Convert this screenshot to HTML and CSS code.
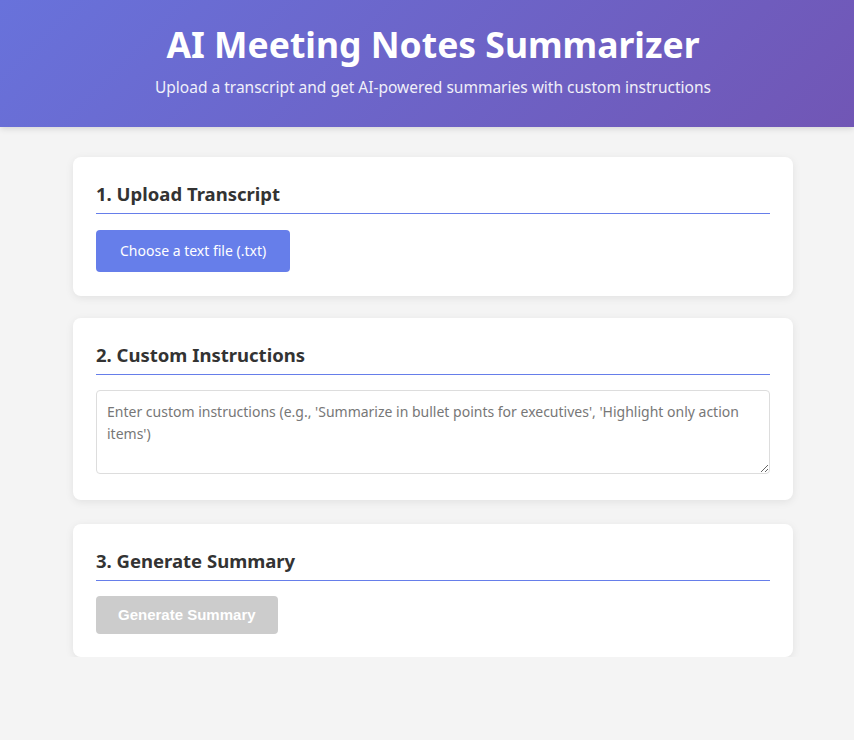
FILE: index.html
```html
<!DOCTYPE html>
<html lang="en">
<head>
<meta charset="utf-8">
<title>AI Meeting Notes Summarizer</title>
<link rel="stylesheet" href="styles.css">
</head>
<body>
<header class="header">
  <h1 class="title">AI Meeting Notes Summarizer</h1>
  <p class="subtitle">Upload a transcript and get AI-powered summaries with custom instructions</p>
</header>
<main class="container">
  <section class="card">
    <h2 class="card-title">1. Upload Transcript</h2>
    <label class="file-btn">Choose a text file (.txt)<input type="file" accept=".txt" class="file-input"></label>
  </section>
  <section class="card">
    <h2 class="card-title">2. Custom Instructions</h2>
    <textarea class="instructions" placeholder="Enter custom instructions (e.g., 'Summarize in bullet points for executives', 'Highlight only action items')"></textarea>
  </section>
  <section class="card card-generate">
    <h2 class="card-title">3. Generate Summary</h2>
    <button class="gen-btn" disabled>Generate Summary</button>
  </section>
</main>
</body>
</html>
```
FILE: styles.css
```css
* { box-sizing: border-box; }
body {
  margin: 0;
  background: #f4f4f4;
  font-family: "Noto Sans", "Open Sans", sans-serif;
  color: #333;
}
.header {
  background: linear-gradient(135deg, #6872db 0%, #7156b5 100%);
  color: #fff;
  text-align: center;
  padding: 23px 8px 29px 20px;
  box-shadow: 0 2px 6px rgba(0,0,0,0.12);
}
.title {
  margin: 0;
  font-size: 35.5px;
  font-weight: 700;
  line-height: 1.2;
}
.subtitle {
  margin: 10px 0 0;
  font-size: 15.5px;
  opacity: 0.9;
}
.container {
  width: 720px;
  margin: 30px 0 0 calc(50% - 354px);
  display: flex;
  flex-direction: column;
  gap: 22px;
}
.card {
  background: #fff;
  border-radius: 8px;
  padding: 24px 23px;
  box-shadow: 0 2px 8px rgba(0,0,0,0.08);
}
.card-generate {
  margin-top: 2px;
  padding-bottom: 23px;
}
.card-title {
  margin: 0 0 15px;
  font-size: 18.5px;
  font-weight: 700;
  color: #333;
  line-height: 26px;
  padding-bottom: 6px;
  border-bottom: 1px solid #667eea;
}
.file-btn {
  display: inline-block;
  margin-top: 1px;
  background: #667eea;
  color: #fff;
  font-size: 14px;
  line-height: 20px;
  padding: 11px 24px;
  border-radius: 4px;
  cursor: pointer;
}
.file-input { display: none; }
.instructions {
  display: block;
  width: 100%;
  height: 84px;
  margin-bottom: 2px;
  border: 1px solid #ddd;
  border-radius: 4px;
  padding: 10px;
  font-family: inherit;
  font-size: 14px;
  line-height: 22px;
  color: #333;
  resize: vertical;
}
.instructions::placeholder { color: #777; }
.gen-btn {
  display: block;
  background: #ccc;
  color: #fff;
  border: none;
  border-radius: 4px;
  padding: 0 22px;
  height: 38px;
  font-family: "Liberation Sans", Arial, sans-serif;
  font-size: 15px;
  font-weight: 700;
  cursor: not-allowed;
}
```
